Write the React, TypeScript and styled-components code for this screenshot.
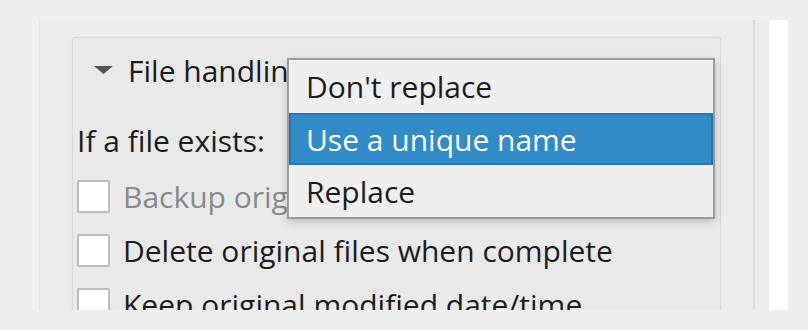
import React from "react";
import styled, { createGlobalStyle } from "styled-components";

const Global = createGlobalStyle`
  html, body { margin: 0; padding: 0; background: #efefef; }
  body { font-family: "Open Sans", "Noto Sans", sans-serif; }
`;

const Page = styled.div`
  width: 808px;
  height: 330px;
  background: #efefef;
  padding: 20px 0 0 39px;
  box-sizing: border-box;
  display: flex;
  align-items: flex-start;
`;

const Viewport = styled.div`
  display: flex;
  height: 290px;
  overflow: hidden;
`;

const Panel = styled.div`
  width: 716px;
  box-sizing: border-box;
  background: #ececec;
  border-left: 1px solid #e4e4e4;
  border-right: 2px solid #dcdcdc;
  padding: 17px 32px 0 32px;
`;

const Spacer = styled.div`
  width: 14px;
  background: #ececec;
`;

const Scrollbar = styled.div`
  width: 19px;
  background: #ffffff;
`;

const Group = styled.div`
  position: relative;
  width: 649px;
  height: 320px;
  box-sizing: border-box;
  border: 1px solid #d9d9d9;
  border-radius: 3px;
  background: #e9e9e9;
  box-shadow: 0 0 2px rgba(0, 0, 0, 0.06);
  padding: 0 0 0 4px;
`;

const Header = styled.div`
  height: 64px;
  display: flex;
  align-items: center;
  padding-left: 17px;
  gap: 15px;
  font-size: 30px;
  color: #1c1c1c;
  white-space: nowrap;
`;

const Arrow = styled.svg`
  width: 19px;
  height: 8px;
  flex: none;
`;

const Row = styled.div<{ $h: number }>`
  height: ${(p) => p.$h}px;
  display: flex;
  align-items: center;
  font-size: 30px;
  color: #1c1c1c;
  white-space: nowrap;
`;

const Body = styled.div`
  padding-top: 10px;
`;

const Box = styled.span`
  width: 29px;
  height: 29px;
  flex: none;
  border: 2px solid #bdbdbd;
  border-radius: 2px;
  background: #ffffff;
  margin-right: 13px;
`;

const Label = styled.span<{ $disabled?: boolean }>`
  color: ${(p) => (p.$disabled ? "#8a8a8a" : "#1c1c1c")};
`;

const Popup = styled.div`
  position: absolute;
  left: 214px;
  top: 20px;
  width: 428px;
  box-sizing: border-box;
  border: 2px solid #9b9b9b;
  background: #efefef;
  box-shadow: 0 3px 8px rgba(0, 0, 0, 0.18);
`;

const Item = styled.div<{ $active?: boolean; $h: number }>`
  height: ${(p) => p.$h}px;
  box-sizing: border-box;
  display: flex;
  align-items: center;
  padding-left: 15px;
  font-size: 30px;
  white-space: nowrap;
  color: ${(p) => (p.$active ? "#ffffff" : "#1c1c1c")};
  background: ${(p) => (p.$active ? "#308bc6" : "transparent")};
  border: 2px solid ${(p) => (p.$active ? "#2a75ac" : "transparent")};
`;

export default function App() {
  return (
    <>
      <Global />
      <Page>
        <Viewport>
          <Panel>
            <Group>
              <Header>
                <Arrow viewBox="0 0 19 8">
                  <polygon points="0,0 19,0 9.5,8" fill="#555555" />
                </Arrow>
                <span>File handling</span>
              </Header>
              <Body>
                <Row $h={57}>If a file exists:</Row>
                <Row $h={54}>
                  <Box />
                  <Label $disabled>Backup original files</Label>
                </Row>
                <Row $h={54}>
                  <Box />
                  <Label>Delete original files when complete</Label>
                </Row>
                <Row $h={54}>
                  <Box />
                  <Label>Keep original modified date/time</Label>
                </Row>
              </Body>
              <Popup>
                <Item $h={53}>Don't replace</Item>
                <Item $h={52} $active>Use a unique name</Item>
                <Item $h={52}>Replace</Item>
              </Popup>
            </Group>
          </Panel>
          <Spacer />
          <Scrollbar />
        </Viewport>
      </Page>
    </>
  );
}
